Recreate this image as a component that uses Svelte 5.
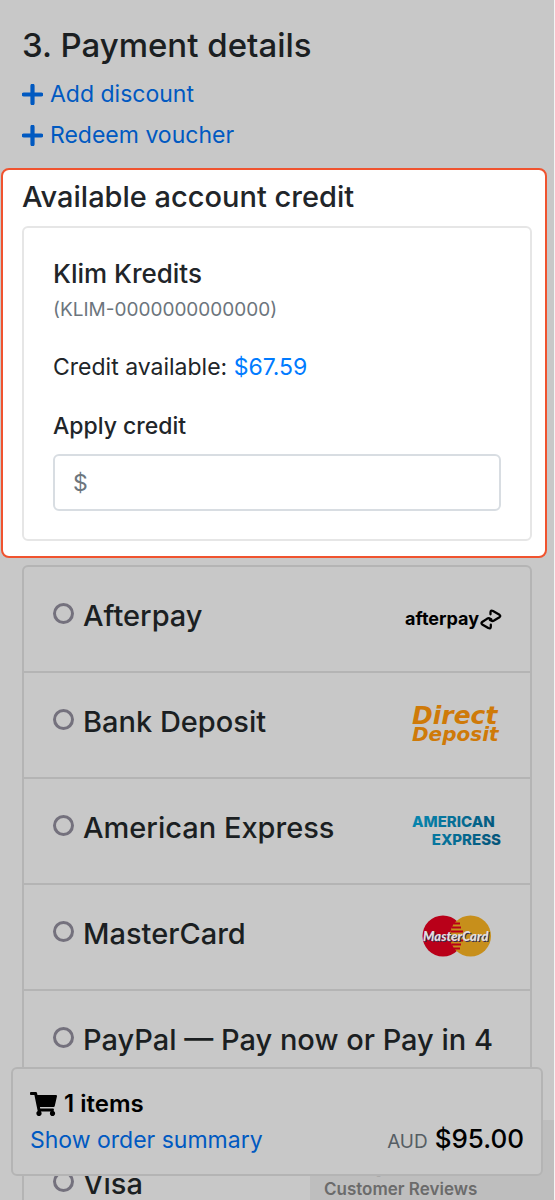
<script>
	let credit = '';
	let selected = '';

	const available = 67.59;
	const total = 95;

	const methods = [
		{ id: 'afterpay', name: 'Afterpay' },
		{ id: 'deposit', name: 'Bank Deposit' },
		{ id: 'amex', name: 'American Express' },
		{ id: 'mastercard', name: 'MasterCard' },
		{ id: 'paypal', name: 'PayPal — Pay now or Pay in 4', tall: true },
		{ id: 'visa', name: 'Visa' }
	];
</script>

<div class="page">
	<main>
		<section class="intro">
			<h1>3. Payment details</h1>
			<a href="#discount">
				<svg class="plus" viewBox="0 0 20 20"><path d="M10 1.7v16.6M1.7 10h16.6" /></svg>
				Add discount
			</a>
			<a href="#voucher">
				<svg class="plus" viewBox="0 0 20 20"><path d="M10 1.7v16.6M1.7 10h16.6" /></svg>
				Redeem voucher
			</a>
		</section>

		<section class="credit">
			<h2>Available account credit</h2>
			<div class="card">
				<h3>Klim Kredits</h3>
				<p class="code">(KLIM-0000000000000)</p>
				<p class="available">Credit available: <span>${available.toFixed(2)}</span></p>
				<label for="credit">Apply credit</label>
				<input id="credit" type="text" placeholder="$" bind:value={credit} />
			</div>
		</section>

		<div class="methods">
			{#each methods as m}
				<div class="method" class:tall={m.tall}>
					<input type="radio" name="method" id={m.id} value={m.id} bind:group={selected} />
					<label for={m.id}>{m.name}</label>
					{#if m.id === 'afterpay'}
						<svg class="logo" width="97" height="30" viewBox="0 0 97 30">
							<text class="afterpay" x="1" y="21">afterpay</text>
							<g class="loop">
								<path d="M86.5 10.3V8.5Q86.5 5.8 89 7L95.5 10.8Q97 12 95.5 13.2L90 16.6Q88.500 17.4 87 16.5L86 16" />
								<path d="M86.8 20.7V22.5Q86.8 25.2 84.3 24L78.2 20.400Q76.700 19.2 78.2 18L83.300 14.6Q84.800 13.800 86.300 14.7L87.300 15.2" />
							</g>
						</svg>
					{:else if m.id === 'deposit'}
						<svg class="logo" width="89" height="56" viewBox="0 0 89 56">
							<text class="direct" x="0" y="27">Direct</text>
							<text class="deposit" x="0" y="44">Deposit</text>
						</svg>
					{:else if m.id === 'amex'}
						<svg class="logo" width="89" height="42" viewBox="0 0 89 42">
							<defs>
								<linearGradient id="amex-fill" gradientUnits="userSpaceOnUse" x1="0" y1="0" x2="89" y2="20">
									<stop offset="0" stop-color="#0787b0" />
									<stop offset="1" stop-color="#04557a" />
								</linearGradient>
							</defs>
							<text class="amex" x="0" y="17">AMERICAN</text>
							<text class="amex" x="89" y="35" text-anchor="end">EXPRESS</text>
						</svg>
					{:else if m.id === 'mastercard'}
						<svg class="logo mastercard" width="70" height="42" viewBox="0 0 70 42">
							<circle cx="21" cy="20" r="20.5" fill="#b90019" />
							<circle cx="48.5" cy="20" r="20.5" fill="#c78f1b" />
							<path d="M32 7.5h6M30 11.5h9M29 15.5h12M29 24.5h12M30 28.5h9M32 32.5h6" stroke="#b90019" stroke-width="2" />
							<text class="mc-text" x="1" y="25">MasterCard</text>
						</svg>
					{/if}
				</div>
			{/each}
		</div>
	</main>

	<aside class="reviews"><span>Google</span>Customer Reviews</aside>

	<footer class="summary">
		<div>
			<strong>
				<svg class="cart" viewBox="0 0 576 512"><path d="M528.12 301.319l47.273-208C578.806 78.301 567.391 64 551.99 64H159.208l-9.166-44.81C147.758 8.021 137.93 0 126.529 0H24C10.745 0 0 10.745 0 24v16c0 13.255 10.745 24 24 24h69.883l70.248 343.435C147.325 417.1 136 435.222 136 456c0 30.928 25.072 56 56 56s56-25.072 56-56c0-15.674-6.447-29.835-16.824-40h209.647C430.447 426.165 424 440.326 424 456c0 30.928 25.072 56 56 56s56-25.072 56-56c0-22.172-12.888-41.332-31.579-50.405l5.517-24.276c3.413-15.018-8.002-29.319-23.403-29.319H218.117l-6.545-32h293.145c11.206 0 20.92-7.754 23.403-18.681z" /></svg>
				1 items
			</strong>
			<a href="#summary">Show order summary</a>
		</div>
		<p class="total"><small>AUD</small> ${total.toFixed(2)}</p>
	</footer>
</div>

<style>
	:global(body) {
		margin: 0;
		background: #c8c8c8;
	}

	.page {
		position: relative;
		box-sizing: border-box;
		height: 100vh;
		overflow: hidden;
		border-right: 1px solid #f4f4f4;
		background: #c8c8c8;
		color: #1b1f22;
		font-family: Inter, "Liberation Sans", sans-serif;
		font-size: 23px;
		line-height: 32px;
	}

	h1, h2, h3, p {
		margin: 0;
		font-weight: 500;
	}

	a {
		color: #0059c1;
		text-decoration: none;
	}

	.intro {
		display: flex;
		flex-direction: column;
		align-items: flex-start;
		gap: 9px;
		padding: 25px 22px 17px;
	}

	h1 {
		margin-bottom: 4px;
		font-size: 33px;
		line-height: 40px;
	}

	.intro a {
		display: flex;
		align-items: center;
		gap: 7px;
	}

	.plus {
		width: 21px;
		height: 21px;
		fill: none;
		stroke: currentColor;
		stroke-width: 4;
		stroke-linecap: round;
	}

	.credit {
		margin: 0 7px 0 1px;
		padding: 7px 13px 15px 19px;
		border: 2px solid #f0532f;
		border-radius: 8px;
		background: #fff;
		color: #212529;
	}

	h2 {
		margin-bottom: 9px;
		font-size: 29px;
		line-height: 40px;
	}

	.card {
		padding: 30px 29px 28px;
		border: 2px solid #e6e6e6;
		border-radius: 6px;
	}

	h3 {
		font-size: 26px;
		line-height: 32px;
	}

	.code {
		margin: 5px 0 26px;
		color: #6c757d;
		font-size: 19px;
		font-weight: 400;
		line-height: 30px;
	}

	.available {
		margin-bottom: 27px;
		font-weight: 400;
	}

	.available span {
		color: #007bff;
	}

	.card label {
		display: block;
		margin-bottom: 12px;
		font-weight: 500;
	}

	.card input {
		display: block;
		box-sizing: border-box;
		width: 100%;
		height: 57px;
		padding: 0 18px;
		border: 2px solid #d8dde2;
		border-radius: 6px;
		background: #fff;
		font: inherit;
	}

	.card input::placeholder {
		color: #6c757d;
		opacity: 1;
	}

	.methods {
		margin: 7px 22px 0;
		border: 2px solid #b4b4b4;
		border-radius: 6px;
	}

	.method {
		display: flex;
		align-items: flex-start;
		box-sizing: border-box;
		height: 106px;
		padding: 30px 29px 0;
		border-bottom: 2px solid #b4b4b4;
	}

	.method:last-child {
		border-bottom: 0;
	}

	.method.tall {
		height: 144px;
	}

	.method input {
		appearance: none;
		flex: none;
		box-sizing: border-box;
		width: 21px;
		height: 21px;
		margin: 6px 9px 0 0;
		border: 3px solid #74717d;
		border-radius: 50%;
	}

	.method input:checked {
		background: #0059c1;
	}

	.method label {
		flex: 1;
		font-size: 29px;
		font-weight: 500;
		line-height: 38px;
		white-space: nowrap;
	}

	.logo {
		flex: none;
		align-self: center;
		margin-bottom: 30px;
		overflow: visible;
	}

	.logo.mastercard {
		margin-right: 9px;
	}

	.afterpay {
		font: 700 18px Inter, sans-serif;
	}

	.loop {
		fill: none;
		stroke: #000;
		stroke-width: 2.3;
		stroke-linecap: round;
		stroke-linejoin: round;
	}

	.direct,
	.deposit {
		fill: #cf7a08;
		font: italic bold 25px "DejaVu Sans", sans-serif;
	}

	.deposit {
		font-size: 20px;
	}

	.amex {
		fill: url(#amex-fill);
		font: 800 15px Inter, sans-serif;
	}

	.mc-text {
		fill: #e0e0e4;
		font: italic 900 13px Lato, sans-serif;
		text-shadow: 1px 1px 0 #343052;
	}

	.reviews {
		position: absolute;
		right: 0;
		bottom: 0;
		box-sizing: border-box;
		width: 244px;
		height: 80px;
		padding: 29px 14px 0;
		background: #bebebe;
		color: #6b6b6b;
		font-size: 17px;
		font-weight: 600;
		line-height: 24px;
	}

	.reviews span {
		display: block;
		font-size: 24px;
		line-height: 28px;
	}

	.summary {
		position: absolute;
		right: 11px;
		bottom: 24px;
		left: 11px;
		display: flex;
		align-items: flex-end;
		justify-content: space-between;
		padding: 17px 17px 16px;
		border: 2px solid #b4b4b4;
		border-radius: 6px;
		background: #c8c8c8;
		color: #000;
	}

	.summary strong {
		display: flex;
		align-items: center;
		gap: 7px;
		font-size: 24px;
		font-weight: 600;
		line-height: 36px;
	}

	.summary a {
		display: block;
		line-height: 36px;
	}

	.cart {
		width: 27px;
		height: 24px;
	}

	.total {
		font-size: 26px;
		line-height: 32px;
	}

	.total small {
		color: #565e64;
		font-size: 19px;
		font-weight: 400;
	}
</style>
